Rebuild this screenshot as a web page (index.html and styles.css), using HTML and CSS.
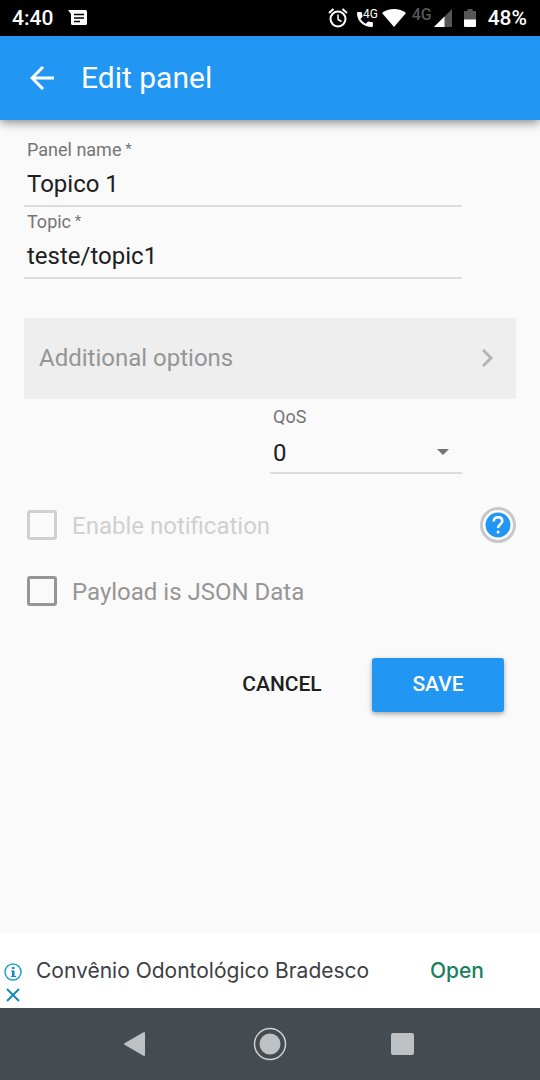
FILE: index.html
```html
<!DOCTYPE html>
<html lang="en">
<head>
<meta charset="utf-8">
<meta name="viewport" content="width=device-width, initial-scale=1">
<title>Edit panel</title>
<link rel="stylesheet" href="styles.css">
</head>
<body>
<div class="screen">
  <div class="status">
    <span class="status-text">4:40</span>
    <svg class="status-message" width="20" height="16" viewBox="0 0 20 16"><path fill="#fff" d="M0 0h17.500q1.500 0 1.500 1.500v12q0 1.500-1.500 1.500h-13q-1.500 0-1.500-1.500V4z"/><path stroke="#000" stroke-width="1.500" d="M6 4.500h10M6 8h10M6 11.500h6"/></svg>
    <div class="status-icons">
      <svg width="20" height="20" viewBox="0 0 20 20" fill="none" stroke="#fff" stroke-width="2"><circle cx="10" cy="11" r="7.500"/><path d="M1 5l4.500-4M19 5l-4.500-4"/><path stroke-width="1.500" d="M10 6.500v5l3.500 2"/></svg>
      <svg class="call" width="22" height="20" viewBox="0 0 22 20"><path fill="#fff" d="M2 4h3q.8 0 .9.800.1 1.700.7 3.200.2.600-.3 1.100L4.500 11q2 3 5.300 4.700l1.900-1.900q.5-.5 1.100-.3 1.500.5 3.200.6.900.1.900.9v3.100q0 1-1 1Q9.500 19 5.200 15 1 11 1 5q0-1 1-1z"/><text class="call-label" x="7" y="10">4G</text></svg>
      <svg class="wifi" width="24" height="18" viewBox="0 0 24 18"><path fill="#fff" d="M0 4Q5 0 12 0t12 4L12 18z"/></svg>
      <span class="network">4G</span>
      <svg class="signal" width="18" height="18" viewBox="0 0 18 18"><path fill="#565659" d="M18 0v18H0z"/><path fill="#fff" d="M10.500 7.500V18H0z"/></svg>
      <svg class="battery" width="12" height="18" viewBox="0 0 12 18"><path fill="#565659" d="M3.500 0h5v2H12v9H0V2h3.500z"/><path fill="#fff" d="M0 10.500h12V17q0 1-1 1H1q-1 0-1-1z"/></svg>
      <span class="status-text">48%</span>
    </div>
  </div>
  <header class="toolbar">
    <button class="icon-button" type="button" aria-label="Back"><svg width="24" height="24" viewBox="0 0 24 24" fill="none" stroke="#fff" stroke-width="3"><path d="M24 12H2M13 1L2 12l11 11"/></svg></button>
    <h1 class="title">Edit panel</h1>
  </header>
  <form class="form">
    <div class="field">
      <label class="label" for="name">Panel name<span class="star"> *</span></label>
      <input class="control" id="name" type="text" value="Topico 1">
    </div>
    <div class="field">
      <label class="label" for="topic">Topic<span class="star"> *</span></label>
      <input class="control" id="topic" type="text" value="teste/topic1">
    </div>
    <button class="more" type="button">Additional options
      <svg width="12" height="18" viewBox="0 0 12 18" fill="none" stroke="#b4b4b4" stroke-width="3"><path d="M1 1l8 8-8 8"/></svg>
    </button>
    <div class="field qos">
      <label class="label" for="qos">QoS</label>
      <div class="select-box">
        <select class="control" id="qos"><option>0</option><option>1</option><option>2</option></select>
        <svg class="caret" width="12" height="6" viewBox="0 0 12 6"><path fill="#747477" d="M0 0h12L6 6z"/></svg>
      </div>
    </div>
    <div class="option">
      <input class="check" id="notify" type="checkbox" disabled>
      <label class="option-label muted" for="notify">Enable notification</label>
      <button class="icon-button" type="button" aria-label="Help"><svg width="36" height="36" viewBox="0 0 36 36"><circle cx="18" cy="18" r="16.500" fill="#fff" stroke="#c8c8c8" stroke-width="3"/><circle cx="18" cy="18" r="12.500" fill="#2196f3"/><path fill="none" stroke="#fff" stroke-width="2.500" d="M13.700 14.500q0-4.200 4.300-4.200t4.300 3.800c0 3.200-4.200 3.200-4.200 7"/><circle cx="18.100" cy="25" r="1.500" fill="#fff"/></svg></button>
    </div>
    <div class="option">
      <input class="check" id="json" type="checkbox">
      <label class="option-label" for="json">Payload is JSON Data</label>
    </div>
    <div class="actions">
      <button class="button" type="button">CANCEL</button>
      <button class="button primary" type="submit">SAVE</button>
    </div>
  </form>
  <aside class="ad">
    <div class="ad-marks">
      <button class="icon-button" type="button" aria-label="Ad information"><svg width="18" height="18" viewBox="0 0 18 18"><circle cx="9" cy="9" r="8" fill="none" stroke="#1ca1cf" stroke-width="1.500"/><path fill="#1389bb" d="M8 4h2.500v2H8zM7 7.500h3.500V13H12v1H7v-1h1V8.500H7z"/></svg></button>
      <button class="icon-button" type="button" aria-label="Close ad"><svg width="14" height="14" viewBox="0 0 14 14" stroke="#1389bb" stroke-width="2"><path d="M1 1l12 12M13 1L1 13"/></svg></button>
    </div>
    <span class="ad-title">Convênio Odontológico Bradesco</span>
    <a class="ad-open" href="#">Open</a>
  </aside>
  <nav class="nav">
    <button class="icon-button" type="button" aria-label="Navigate back"><svg width="34" height="34" viewBox="0 0 34 34"><path fill="#bdc1c3" stroke="#bdc1c3" stroke-width="2" stroke-linejoin="round" d="M26 6v22L7 17z"/></svg></button>
    <button class="icon-button" type="button" aria-label="Home"><svg width="34" height="34" viewBox="0 0 34 34"><circle cx="17" cy="17" r="15.500" fill="none" stroke="#d0d3d4" stroke-width="1.500"/><circle cx="17" cy="17" r="10.500" fill="#bdc1c3"/></svg></button>
    <button class="icon-button" type="button" aria-label="Recent apps"><svg width="34" height="34" viewBox="0 0 34 34"><rect x="3" y="6" width="23" height="22" rx="2" fill="#bdc1c3"/></svg></button>
  </nav>
</div>
</body>
</html>
```
FILE: styles.css
```css
* { box-sizing: border-box; }

body {
  margin: 0;
  background: #fafafa;
  font-family: Roboto, "Liberation Sans", sans-serif;
  color: #202020;
}

button, input, select { font: inherit; color: inherit; }

svg { display: block; flex: none; }

.screen {
  display: flex;
  flex-direction: column;
  min-height: 100vh;
}

.status {
  display: flex;
  align-items: center;
  height: 36px;
  padding: 0 13px 0 12px;
  background: #000;
  color: #fff;
}

.status-text {
  font-size: 21px;
  font-weight: 500;
  line-height: 36px;
}

.status-message { margin-left: 15px; }

.status-icons {
  display: flex;
  align-items: center;
  margin-left: auto;
}

.call { margin-left: 8px; }

.call-label {
  fill: #fff;
  font-size: 12px;
}

.wifi { margin-left: 4px; }

.network {
  margin-left: 6px;
  padding-bottom: 6px;
  color: #565659;
  font-size: 16px;
  font-weight: 500;
  line-height: 20px;
}

.signal { margin-left: 2px; }

.battery { margin: 0 12px; }

.toolbar {
  display: flex;
  align-items: center;
  gap: 27px;
  height: 84px;
  padding: 0 30px;
  background: #2196f3;
  box-shadow: 0 2px 10px rgba(0, 0, 0, 0.5);
}

.title {
  margin: 0;
  color: #fff;
  font-size: 30px;
  font-weight: 400;
  line-height: 36px;
}

.icon-button {
  display: block;
  padding: 0;
  border: 0;
  background: none;
}

.form {
  flex: 1;
  padding: 15px 24px 24px;
}

.field {
  height: 72px;
  margin-right: 54px;
  padding-top: 4px;
  border-bottom: 2px solid #dcdcdc;
}

.label {
  display: block;
  padding-left: 3px;
  color: #757575;
  font-size: 18px;
  line-height: 22px;
}

.star {
  font-size: 15px;
  line-height: 1;
  vertical-align: 2px;
}

.control {
  display: block;
  width: 100%;
  height: 44px;
  padding: 2px 3px 0;
  border: 0;
  border-radius: 0;
  outline: 0;
  background: none;
  font-size: 24px;
  appearance: none;
}

select.control { padding-top: 6px; }

.more {
  display: flex;
  align-items: center;
  justify-content: space-between;
  width: 100%;
  height: 81px;
  margin: 39px 0 3px;
  padding: 0 22px 2px 15px;
  border: 0;
  background: #eee;
  color: #959595;
  font-size: 24px;
}

.qos { margin-left: 50%; }

.select-box { position: relative; }

.caret {
  position: absolute;
  top: 21px;
  right: 13px;
  pointer-events: none;
}

.option {
  display: flex;
  align-items: center;
  height: 66px;
  padding-left: 3px;
}

.qos + .option { margin-top: 18px; }

.check {
  width: 30px;
  height: 30px;
  margin: 0;
  border: 3px solid #969696;
  border-radius: 3px;
  appearance: none;
}

.check:disabled { border-color: #d0d0d0; }

.option-label {
  flex: 1;
  padding: 2px 0 0 15px;
  color: #969696;
  font-size: 24px;
  line-height: 30px;
}

.muted { color: #d0d0d0; }

.actions {
  display: flex;
  justify-content: flex-end;
  gap: 24px;
  padding: 34px 12px 0 0;
}

.button {
  min-width: 132px;
  height: 54px;
  padding-bottom: 3px;
  border: 0;
  border-radius: 3px;
  background: none;
  font-size: 21px;
  font-weight: 500;
}

.primary {
  background: #2196f3;
  box-shadow: 0 2px 5px rgba(0, 0, 0, 0.35);
  color: #fff;
}

.ad {
  display: flex;
  align-items: center;
  height: 75px;
  padding: 0 56px 0 4px;
  background: #fff;
  font-family: Inter, "Open Sans", sans-serif;
  font-size: 21px;
  line-height: 28px;
}

.ad-marks {
  display: flex;
  flex-direction: column;
  align-items: center;
  align-self: flex-end;
  gap: 7px;
  padding-bottom: 6px;
}

.ad-title {
  padding-left: 14px;
  color: #3c4043;
}

.ad-open {
  margin-left: auto;
  color: #188060;
  font-weight: 500;
  text-decoration: none;
}

.nav {
  display: flex;
  justify-content: center;
  align-items: center;
  gap: 101px;
  height: 72px;
  background: #454c51;
}
```
